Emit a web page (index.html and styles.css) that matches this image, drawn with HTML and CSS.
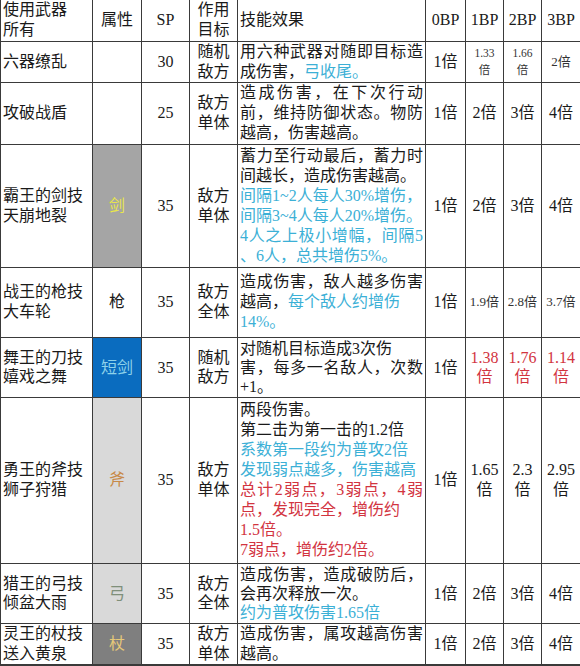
FILE: index.html
```html
<!DOCTYPE html>
<html lang="zh">
<head>
<meta charset="utf-8">
<link rel="stylesheet" href="styles.css">
</head>
<body>
<table class="skills">
  <colgroup>
    <col class="c-name"><col class="c-attr"><col class="c-sp"><col class="c-tgt"><col class="c-fx">
    <col class="c-bp0"><col class="c-bp"><col class="c-bp"><col class="c-bp3">
  </colgroup>
  <tr class="r-head">
    <td class="name"><div>使用武器</div><div>所有</div></td>
    <td class="ctr"><div>属性</div></td>
    <td class="ctr"><div>SP</div></td>
    <td class="ctr"><div>作用</div><div>目标</div></td>
    <td class="fx"><div>技能效果</div></td>
    <td class="ctr"><div>0BP</div></td>
    <td class="ctr"><div>1BP</div></td>
    <td class="ctr"><div>2BP</div></td>
    <td class="ctr"><div>3BP</div></td>
  </tr>
  <tr class="r1">
    <td class="name"><div>六器缭乱</div></td>
    <td></td>
    <td class="ctr"><div>30</div></td>
    <td class="ctr"><div>随机</div><div>敌方</div></td>
    <td class="fx"><div class="j">用六种武器对随即目标造</div><div>成伤害，<span class="blue">弓收尾。</span></div></td>
    <td class="ctr"><div>1倍</div></td>
    <td class="ctr tiny"><div>1.33</div><div>倍</div></td>
    <td class="ctr tiny"><div>1.66</div><div>倍</div></td>
    <td class="ctr small"><div>2倍</div></td>
  </tr>
  <tr class="r2">
    <td class="name"><div>攻破战盾</div></td>
    <td></td>
    <td class="ctr"><div>25</div></td>
    <td class="ctr"><div>敌方</div><div>单体</div></td>
    <td class="fx"><div class="j">造成伤害，在下次行动</div><div class="j">前，维持防御状态。物防</div><div>越高，伤害越高。</div></td>
    <td class="ctr"><div>1倍</div></td>
    <td class="ctr"><div>2倍</div></td>
    <td class="ctr"><div>3倍</div></td>
    <td class="ctr"><div>4倍</div></td>
  </tr>
  <tr class="r3">
    <td class="name"><div>霸王的剑技</div><div>天崩地裂</div></td>
    <td class="ctr attr-sword"><div>剑</div></td>
    <td class="ctr"><div>35</div></td>
    <td class="ctr"><div>敌方</div><div>单体</div></td>
    <td class="fx"><div class="j">蓄力至行动最后，蓄力时</div><div>间越长，造成伤害越高。</div><div class="blue">间隔1~2人每人30%增伤，</div><div class="blue">间隔3~4人每人20%增伤。</div><div class="blue j">4人之上极小增幅，间隔5</div><div class="blue">、6人，总共增伤5%。</div></td>
    <td class="ctr"><div>1倍</div></td>
    <td class="ctr"><div>2倍</div></td>
    <td class="ctr"><div>3倍</div></td>
    <td class="ctr"><div>4倍</div></td>
  </tr>
  <tr class="r4">
    <td class="name"><div>战王的枪技</div><div>大车轮</div></td>
    <td class="ctr"><div>枪</div></td>
    <td class="ctr"><div>35</div></td>
    <td class="ctr"><div>敌方</div><div>全体</div></td>
    <td class="fx"><div class="j">造成伤害，敌人越多伤害</div><div>越高，<span class="blue">每个敌人约增伤</span></div><div class="blue">14%。</div></td>
    <td class="ctr"><div>1倍</div></td>
    <td class="ctr small"><div>1.9倍</div></td>
    <td class="ctr small"><div>2.8倍</div></td>
    <td class="ctr small"><div>3.7倍</div></td>
  </tr>
  <tr class="r5 tight">
    <td class="name"><div>舞王的刀技</div><div>嬉戏之舞</div></td>
    <td class="ctr attr-dagger"><div>短剑</div></td>
    <td class="ctr"><div>35</div></td>
    <td class="ctr"><div>随机</div><div>敌方</div></td>
    <td class="fx"><div>对随机目标造成3次伤</div><div class="j">害，每多一名敌人，次数</div><div>+1。</div></td>
    <td class="ctr"><div>1倍</div></td>
    <td class="ctr red"><div>1.38</div><div>倍</div></td>
    <td class="ctr red"><div>1.76</div><div>倍</div></td>
    <td class="ctr red"><div>1.14</div><div>倍</div></td>
  </tr>
  <tr class="r6">
    <td class="name"><div>勇王的斧技</div><div>狮子狩猎</div></td>
    <td class="ctr attr-axe"><div>斧</div></td>
    <td class="ctr"><div>35</div></td>
    <td class="ctr"><div>敌方</div><div>单体</div></td>
    <td class="fx"><div>两段伤害。</div><div>第二击为第一击的1.2倍</div><div class="blue">系数第一段约为普攻2倍</div><div class="blue">发现弱点越多，伤害越高</div><div class="red j">总计2弱点，3弱点，4弱</div><div class="red">点，发现完全，增伤约</div><div class="red">1.5倍。</div><div class="red">7弱点，增伤约2倍。</div></td>
    <td class="ctr"><div>1倍</div></td>
    <td class="ctr"><div>1.65</div><div>倍</div></td>
    <td class="ctr"><div>2.3</div><div>倍</div></td>
    <td class="ctr"><div>2.95</div><div>倍</div></td>
  </tr>
  <tr class="r7 tight">
    <td class="name"><div>猎王的弓技</div><div>倾盆大雨</div></td>
    <td class="ctr attr-bow"><div>弓</div></td>
    <td class="ctr"><div>35</div></td>
    <td class="ctr"><div>敌方</div><div>全体</div></td>
    <td class="fx"><div class="j">造成伤害，造成破防后，</div><div>会再次释放一次。</div><div class="blue">约为普攻伤害1.65倍</div></td>
    <td class="ctr"><div>1倍</div></td>
    <td class="ctr"><div>2倍</div></td>
    <td class="ctr"><div>3倍</div></td>
    <td class="ctr"><div>4倍</div></td>
  </tr>
  <tr class="r8">
    <td class="name"><div>灵王的杖技</div><div>送入黄泉</div></td>
    <td class="ctr attr-staff"><div>杖</div></td>
    <td class="ctr"><div>35</div></td>
    <td class="ctr"><div>敌方</div><div>单体</div></td>
    <td class="fx"><div class="j">造成伤害，属攻越高伤害</div><div>越高。</div></td>
    <td class="ctr"><div>1倍</div></td>
    <td class="ctr"><div>2倍</div></td>
    <td class="ctr"><div>3倍</div></td>
    <td class="ctr"><div>4倍</div></td>
  </tr>
</table>
</body>
</html>
```

FILE: styles.css
```css
html, body {
  margin: 0;
  padding: 0;
  background: #ffffff;
}

.skills {
  border-collapse: collapse;
  table-layout: fixed;
  width: 580px;
  font-family: "Liberation Serif", "Noto Sans CJK SC", serif;
  font-size: 16px;
  line-height: 19px;
  color: #1a1a1a;
}

.c-name { width: 92px; }
.c-attr { width: 49px; }
.c-sp { width: 48px; }
.c-tgt { width: 48px; }
.c-fx { width: 188px; }
.c-bp0 { width: 40px; }
.c-bp { width: 38px; }
.c-bp3 { width: 39px; }

.skills td {
  border: 1px solid #3a3a3a;
  padding: 0 2px;
  vertical-align: middle;
  white-space: nowrap;
  overflow: hidden;
}

.skills td div {
  height: 20px;
  line-height: 20px;
}

.skills .tight td div {
  height: 19px;
  line-height: 19px;
}

.r-head td { border-top: none; }
.r8 td { border-bottom: 2px solid #3a3a3a; }

.r-head { height: 41px; }
.r1 { height: 41px; }
.r2 { height: 62px; }
.r3 { height: 123px; }
.r4 { height: 70px; }
.r5 { height: 60px; }
.r6 { height: 166px; }
.r7 { height: 60px; }
.r8 { height: 41px; }

.name { text-align: left; padding-left: 3px; }
.ctr { text-align: center; }
.fx { text-align: left; padding: 0 3px; }
.fx .j { text-align: justify; text-align-last: justify; }

.tiny { font-size: 11.5px; color: #333; }
.skills .tiny div { height: 17px; line-height: 17px; }
.small { font-size: 13px; color: #333; }
.skills .small { padding: 0 1px; }

.blue { color: #3cb0d6; }
.red { color: #d2343f; }

.attr-sword { background: #a5a5a5; color: #e8e64a; }
.attr-dagger { background: #0a6cbf; color: #8ed2ea; }
.attr-axe { background: #d9d9d9; color: #c88a48; }
.attr-bow { background: #d9d9d9; color: #7f8f7a; }
.attr-staff { background: #7f7f7f; color: #e6c878; }
```
